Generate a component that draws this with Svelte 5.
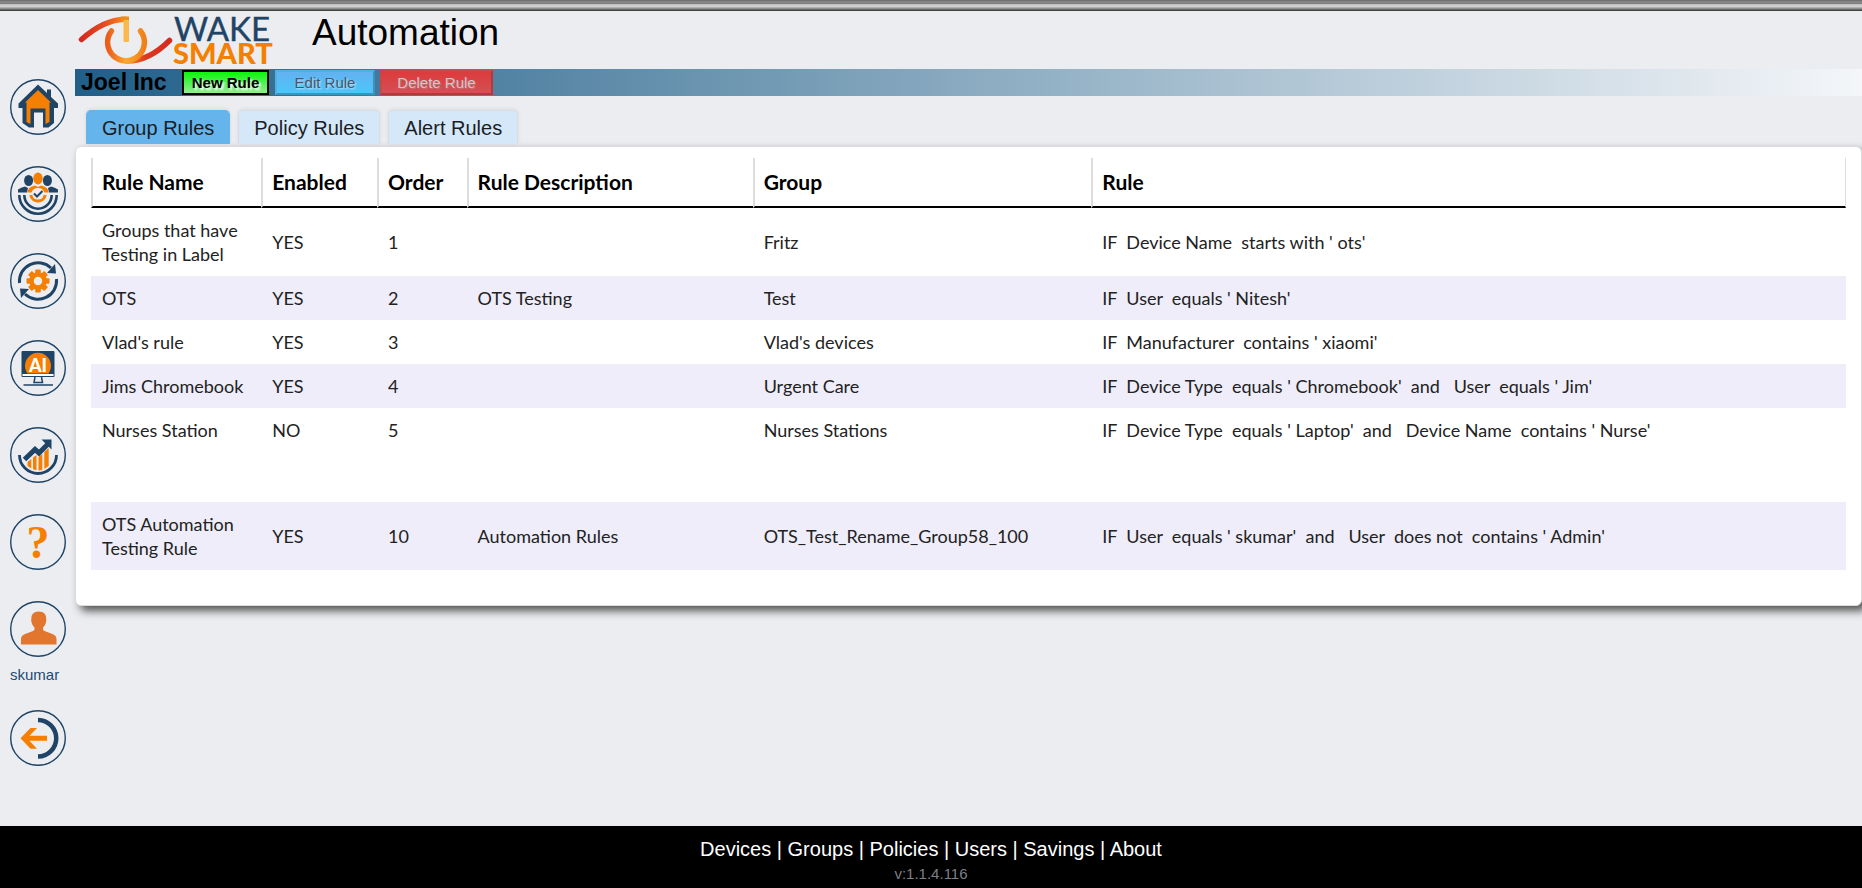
<script>
  const tabs = ['Group Rules', 'Policy Rules', 'Alert Rules'];
  let active = $state('Group Rules');

  const columns = [
    { label: 'Rule Name', width: 9.7 },
    { label: 'Enabled', width: 6.6 },
    { label: 'Order', width: 5.1 },
    { label: 'Rule Description', width: 16.3 },
    { label: 'Group', width: 19.3 },
    { label: 'Rule', width: 43 }
  ];

  const rules = [
    { name: 'Groups that have Testing in Label', enabled: 'YES', order: 1, description: '', group: 'Fritz', rule: "IF  Device Name  starts with ' ots'" },
    { name: 'OTS', enabled: 'YES', order: 2, description: 'OTS Testing', group: 'Test', rule: "IF  User  equals ' Nitesh'" },
    { name: "Vlad's rule", enabled: 'YES', order: 3, description: '', group: "Vlad's devices", rule: "IF  Manufacturer  contains ' xiaomi'" },
    { name: 'Jims Chromebook', enabled: 'YES', order: 4, description: '', group: 'Urgent Care', rule: "IF  Device Type  equals ' Chromebook'  and   User  equals ' Jim'" },
    { name: 'Nurses Station', enabled: 'NO', order: 5, description: '', group: 'Nurses Stations', rule: "IF  Device Type  equals ' Laptop'  and   Device Name  contains ' Nurse'", spaced: true },
    { name: 'OTS Automation Testing Rule', enabled: 'YES', order: 10, description: 'Automation Rules', group: 'OTS_Test_Rename_Group58_100', rule: "IF  User  equals ' skumar'  and   User  does not  contains ' Admin'" }
  ];

  const links = ['Devices', 'Groups', 'Policies', 'Users', 'Savings', 'About'];
  const teeth = [0, 45, 90, 135, 180, 225, 270, 315];
</script>

<div class="page">
  <div class="chrome"></div>
  <div class="body">
    <nav class="side">
      <a href="#home" aria-label="Home">
        <svg viewBox="0 0 56 56">
          <circle class="ring" cx="28" cy="28" r="27.3" />
          <path class="navy" d="M28 5.5 L37 14 V10.5 H41 V18 L48 24.5 V29 H44 V44 L38.5 48.5 H33 V33.5 H24 V48.5 H19 L12.500 44 V29 H8.500 V24.500 Z" />
          <path class="orange" d="M28 11 L41 23.500 H39.500 V43 L35.500 45 V29.500 H20.500 V45 L16.500 43 V23.500 H15 Z" />
        </svg>
      </a>
      <a href="#groups" aria-label="Groups">
        <svg viewBox="0 0 56 56">
          <circle class="ring" cx="28" cy="28" r="27.3" />
          <g class="navy">
            <ellipse cx="18.600" cy="14.500" rx="4.500" ry="5.600" />
            <ellipse cx="37.400" cy="14.500" rx="4.500" ry="5.600" />
            <path d="M8 26.500 V23.500 Q11 21.500 15 20.500 L18 22 L17 26.500 Z M48 26.500 V23.500 Q45 21.500 41 20.500 L38 22 L39 26.500 Z" />
          </g>
          <g class="orange">
            <ellipse cx="28" cy="12.500" rx="4.700" ry="6" />
            <path d="M17.500 26.500 Q17.500 21 25 19.500 L28 21 L31 19.500 Q38.500 21 38.500 26.500 H34.500 A7 7 0 0 0 21.500 26.500 Z" />
          </g>
          <path class="navyline" stroke-width="2.600" d="M9.300 29 A18.700 18.700 0 0 0 46.700 29 M14.300 29 A13.700 13.700 0 0 0 41.700 29" />
          <path class="orangeline" stroke-width="3" d="M20.800 29 A7.300 7.300 0 0 0 35.200 29" />
          <path class="navyline" stroke-width="2" d="M24 27.500 L27 30.500 L32.500 25" />
        </svg>
      </a>
      <a href="#automation" aria-label="Automation">
        <svg viewBox="0 0 56 56">
          <circle class="ring" cx="28" cy="28" r="27.3" />
          <g class="orange">
            {#each teeth as angle}
              <rect x="25.200" y="16.500" width="5.600" height="6" rx="1" transform="rotate({angle} 28 28)" />
            {/each}
          </g>
          <circle class="orangeline" cx="28" cy="28" r="6.500" stroke-width="4.500" />
          <path class="navyline" stroke-width="3" d="M9.500 30 A18.600 18.600 0 0 1 41 15" />
          <path class="navyline" stroke-width="3" d="M46.500 26 A18.600 18.600 0 0 1 15 41" />
          <path class="navy" d="M45 11 L46 20.500 L37 20 Z M11 45 L10 35.500 L19 36 Z" />
        </svg>
      </a>
      <a href="#ai" aria-label="AI">
        <svg viewBox="0 0 56 56">
          <circle class="ring" cx="28" cy="28" r="27.3" />
          <rect class="navy" x="11.500" y="11" width="33" height="26" rx="1" />
          <path class="orange" d="M17.500 33.500 A13 13 0 1 1 38.500 33.500 Z" />
          <rect x="12.500" y="34" width="31" height="2" fill="#fff" />
          <text x="28" y="32" class="ai">AI</text>
          <path class="navyline" stroke-width="1.500" d="M25 37 L24 42.500 H32.500 L31.500 37 M13.500 45 H43" />
        </svg>
      </a>
      <a href="#savings" aria-label="Savings">
        <svg viewBox="0 0 56 56">
          <circle class="ring" cx="28" cy="28" r="27.3" />
          <path class="navyline" stroke-width="2.800" d="M9.500 28 A18.500 18.500 0 0 0 46.500 28" />
          <path class="orange" d="M17.500 35 L21.300 32 V41.500 L17.500 39 Z M23 30.500 L26.500 28 V43.300 L23 42.300 Z M28.500 30 L32.300 27 V43 L28.500 43.500 Z M34.300 25 L38.700 21 V39 L34.300 42 Z" />
          <path class="navyline" stroke-width="5" d="M14.500 32.500 L25 22.500 L29 26 L38 17" />
          <path class="navy" d="M31.500 12.500 H41.500 V22.500 Z" />
        </svg>
      </a>
      <a href="#help" aria-label="Help">
        <svg viewBox="0 0 56 56">
          <circle class="ring" cx="28" cy="28" r="27.3" />
          <text x="28" y="44" class="help">?</text>
        </svg>
      </a>
      <a href="#profile" class="profile">
        <svg viewBox="0 0 56 56">
          <circle class="ring" cx="28" cy="28" r="27.3" />
          <path fill="#e2762e" d="M11 43.500 V38 Q11 34.500 15 33 L23 30 Q25 29 24.500 26.500 Q21.500 24 21.200 19 Q20.500 10.500 28.800 10.500 Q37 10.500 36.300 19 Q36 24 33 26.500 Q32.500 29 34.500 30 L42.500 33 Q46.500 34.500 46.500 38 V43.500 Z" />
        </svg>
        <span>skumar</span>
      </a>
      <a href="#logout" aria-label="Log out">
        <svg viewBox="0 0 56 56">
          <circle class="ring" cx="28" cy="28" r="27.3" />
          <path class="navyline" stroke-width="4.500" d="M28 10 A18.200 18.200 0 0 1 28 46.500" />
          <path class="orange" d="M10.500 28.300 L20.500 18 H27 L19.500 25.800 H37 V30.800 H19.500 L27 38.700 H20.500 Z" />
        </svg>
      </a>
    </nav>

    <main>
      <header>
        <svg class="logo" viewBox="0 0 198 58" role="img" aria-label="Wake Smart">
          <defs>
            <linearGradient id="sweepIn" x1="0" x2="1"><stop offset="0" stop-color="#d62a20" /><stop offset="0.500" stop-color="#e2491f" /><stop offset="1" stop-color="#f58a1c" /></linearGradient>
            <linearGradient id="power" x1="0" x2="1"><stop offset="0" stop-color="#ea5c1c" /><stop offset="0.500" stop-color="#fba82c" /><stop offset="1" stop-color="#f08018" /></linearGradient>
            <linearGradient id="sweepOut" x1="0" x2="1"><stop offset="0" stop-color="#f58a1c" /><stop offset="0.450" stop-color="#dd3a20" /><stop offset="1" stop-color="#d62a20" /></linearGradient>
          </defs>
          <g fill="none" stroke-width="5.500" stroke-linecap="round">
            <path stroke="url(#sweepOut)" d="M51 50 C68 50.500 82 42 94.500 29.500" />
            <path stroke="url(#power)" d="M36.500 20 A18.400 18.400 0 1 0 65.500 20" />
            <path stroke="url(#sweepIn)" d="M6.500 28.500 C21 15.500 34 8.500 50 8.200" />
          </g>
          <path fill="#f58a1c" d="M46 5.500 H54 V11 H46 Z" />
          <rect x="48.500" y="9" width="5.500" height="22" rx="1" fill="#fcb84a" />
          <text class="wake" x="99" y="30">WAKE</text>
          <text class="smart" x="98" y="53">SMART</text>
        </svg>
        <h1>Automation</h1>
      </header>

      <div class="bar">
        <strong>Joel Inc</strong>
        <button class="new">New Rule</button>
        <button class="edit" disabled>Edit Rule</button>
        <button class="delete" disabled>Delete Rule</button>
      </div>

      <div class="tabs" role="tablist">
        {#each tabs as tab}
          <button role="tab" aria-selected={active === tab} class:active={active === tab} onclick={() => (active = tab)}>{tab}</button>
        {/each}
      </div>

      <section class="card">
        <table>
          <colgroup>
            {#each columns as column}
              <col style="width: {column.width}%" />
            {/each}
          </colgroup>
          <thead>
            <tr>
              {#each columns as column}
                <th scope="col">{column.label}</th>
              {/each}
            </tr>
          </thead>
          <tbody>
            {#each rules as row}
              <tr class:spaced={row.spaced}>
                <td>{row.name}</td>
                <td>{row.enabled}</td>
                <td>{row.order}</td>
                <td>{row.description}</td>
                <td>{row.group}</td>
                <td>{row.rule}</td>
              </tr>
            {/each}
          </tbody>
        </table>
      </section>
    </main>
  </div>

  <footer>
    <div class="links">
      {#each links as link, i}{#if i > 0}{' | '}{/if}<a href="#{link.toLowerCase()}">{link}</a>{/each}
    </div>
    <div class="version">v:1.1.4.116</div>
  </footer>
</div>

<style>
  :global(body) {
    margin: 0;
    background: #ecedf1;
  }
  .page {
    min-height: 100vh;
    display: flex;
    flex-direction: column;
    font-family: "Liberation Sans", Arial, sans-serif;
    color: #000;
  }
  .chrome {
    height: 11px;
    background: linear-gradient(#686868, #8e8e8e 20%, #7c7c7c 32%, #c4c4c4 40%, #d0d0d0 60%, #a0a0a0 72%, #777 84%, #444 92%);
  }
  .body {
    flex: 1;
    display: flex;
  }
  .side {
    width: 75px;
    flex: none;
    box-sizing: border-box;
    padding: 68px 0 0 10px;
    display: flex;
    flex-direction: column;
    gap: 31px;
  }
  .side a {
    display: block;
    color: #1c4a72;
    font-size: 15px;
    line-height: 18px;
    text-decoration: none;
  }
  .side svg {
    display: block;
    width: 56px;
    height: 56px;
  }
  .profile {
    margin-bottom: -5px;
  }
  .profile span {
    display: block;
    margin-top: 9px;
  }
  .ring {
    fill: none;
    stroke: #1f4466;
    stroke-width: 1.4;
  }
  .navy {
    fill: #1f4466;
  }
  .orange {
    fill: #f57f00;
  }
  .navyline {
    fill: none;
    stroke: #1f4466;
  }
  .orangeline {
    fill: none;
    stroke: #f57f00;
  }
  .ai {
    font: 900 18px Lato, sans-serif;
    fill: #fff;
    text-anchor: middle;
  }
  .help {
    font: bold 46px "Liberation Serif", serif;
    fill: #f57f00;
    text-anchor: middle;
  }
  main {
    flex: 1;
    min-width: 0;
  }
  header {
    height: 58px;
    display: flex;
    gap: 39px;
  }
  .logo {
    width: 198px;
    height: 58px;
    overflow: visible;
  }
  .wake {
    font: 400 33px Lato, sans-serif;
    fill: #1f4466;
    stroke: #1f4466;
    stroke-width: 0.4;
  }
  .smart {
    font: 900 29px Lato, sans-serif;
    fill: #f57f00;
  }
  h1 {
    margin: 0;
    font-size: 37px;
    line-height: 44px;
    font-weight: 400;
  }
  .bar {
    height: 27px;
    display: flex;
    align-items: center;
    padding-left: 6px;
    background: linear-gradient(90deg, #205f88, #f4f6f9);
  }
  .bar strong {
    width: 101px;
    font-size: 23px;
    line-height: 27px;
  }
  .bar button {
    box-sizing: border-box;
    height: 25px;
    padding: 0;
    font-family: inherit;
    font-size: 15px;
    line-height: 20px;
    border: 2px solid #000;
  }
  .bar .new {
    width: 87px;
    font-weight: 700;
    color: #000;
    text-shadow: 2px 2px 2px #fff;
    background: linear-gradient(#0bf50b, #90ee90);
    margin-right: 6px;
  }
  .bar .edit {
    width: 100px;
    color: #4a5568;
    text-shadow: 1px 1px 2px #cfe8fa;
    background: linear-gradient(#64b1f0, #48c8fa);
    border-color: #50b0e0 #3e92c0 #3e92c0 #50b0e0;
    margin-right: 5px;
  }
  .bar .delete {
    width: 113px;
    color: #d6c4c8;
    text-shadow: 1px 1px 1px #b87878;
    background: linear-gradient(#dc3c3e, #d45052);
    border-color: #cc4648 #b03a40 #b03a40 #cc4648;
  }
  .tabs {
    display: flex;
    gap: 8px;
    padding: 14px 0 2px 11px;
  }
  .tabs button {
    box-sizing: border-box;
    height: 34px;
    padding: 0 15px;
    border: 1px solid #d9dde2;
    border-bottom: 0;
    border-radius: 5px 5px 0 0;
    background: #d5e8f9;
    color: #1a1e24;
    font-family: inherit;
    font-size: 20px;
    line-height: 30px;
    box-shadow: 0 -1px 4px #00000014;
  }
  .tabs .active {
    background: #66b4ec;
    border-color: #66b4ec;
  }
  .card {
    padding: 11px 15px 35px;
    border: 1px solid #dcdcdc;
    border-radius: 6px;
    background: #fff;
    box-shadow: 5px 5px 8px #555;
    overflow: hidden;
  }
  table {
    width: 100%;
    table-layout: fixed;
    border-collapse: separate;
    border-spacing: 0;
    font-family: Lato, "Noto Sans", sans-serif;
    font-size: 18px;
    line-height: 24px;
    text-align: left;
    color: #222;
  }
  th {
    padding: 12px 9px;
    font-size: 21px;
    font-weight: 700;
    color: #000;
    border-left: 2px solid #ddd;
    border-bottom: 2px solid #000;
  }
  th:last-child {
    border-right: 1px solid #ddd;
  }
  td {
    padding: 10px 8px 10px 11px;
    white-space: pre-wrap;
  }
  tbody tr:nth-child(even) {
    background: #eeedf9;
  }
  .spaced td {
    padding-bottom: 60px;
  }
  footer {
    height: 62px;
    background: #000;
    text-align: center;
  }
  .links {
    padding-top: 11px;
    font-size: 20px;
    line-height: 24px;
    color: #fff;
  }
  .links a {
    color: #fff;
    text-decoration: none;
  }
  .version {
    padding-top: 4px;
    font-size: 15px;
    line-height: 18px;
    color: #7f7f86;
  }
</style>
